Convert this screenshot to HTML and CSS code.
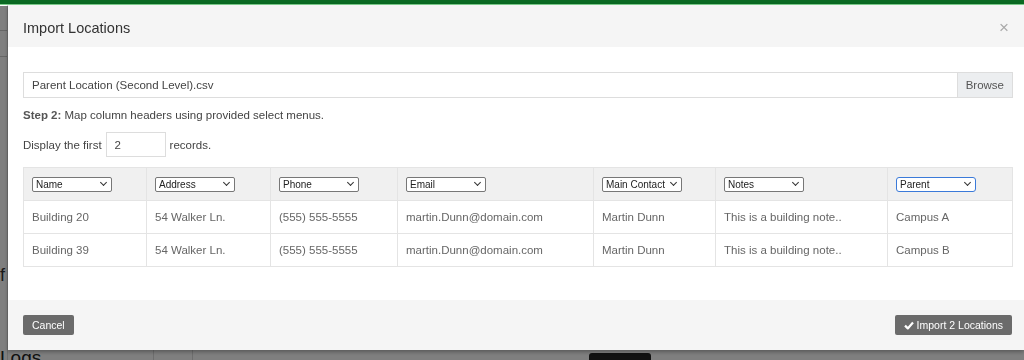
FILE: index.html
```html
<!DOCTYPE html>
<html lang="en">
<head>
    <meta charset="UTF-8">
    <title>Import Locations</title>
    <link rel="stylesheet" href="styles.css">
</head>
<body>
    <div class="topbar"></div>
    <div class="page">
        <div class="side">
            <div class="side-row"></div>
            <div class="side-row"></div>
            <div class="side-letter">f</div>
        </div>
        <div class="page-bottom">
            <span class="logs">Logs</span>
            <span class="col-line"></span>
            <span class="page-head">IMPORT LOGS</span>
            <span class="dark-btn"></span>
            <span class="page-head second">IMPORT LOCATIONS</span>
        </div>
    </div>
    <div class="backdrop"></div>

    <div class="modal">
        <div class="modal-header">
            <h4>Import Locations</h4>
            <span class="close">&times;</span>
        </div>
        <div class="modal-body">
            <div class="file-input">
                <span class="file-name">Parent Location (Second Level).csv</span>
                <span class="browse">Browse</span>
            </div>
            <p class="step"><b>Step 2:</b> Map column headers using provided select menus.</p>
            <div class="display-row">
                Display the first <input type="text" class="count" value="2"> records.
            </div>
            <table class="map-table">
                <thead>
                    <tr>
                        <th class="c1"><span class="sel">Name</span></th>
                        <th class="c2"><span class="sel">Address</span></th>
                        <th class="c3"><span class="sel">Phone</span></th>
                        <th class="c4"><span class="sel">Email</span></th>
                        <th class="c5"><span class="sel">Main Contact</span></th>
                        <th class="c6"><span class="sel">Notes</span></th>
                        <th class="c7"><span class="sel focus">Parent</span></th>
                    </tr>
                </thead>
                <tbody>
                    <tr>
                        <td>Building 20</td>
                        <td>54 Walker Ln.</td>
                        <td>(555) 555-5555</td>
                        <td>martin.Dunn@domain.com</td>
                        <td>Martin Dunn</td>
                        <td>This is a building note..</td>
                        <td>Campus A</td>
                    </tr>
                    <tr>
                        <td>Building 39</td>
                        <td>54 Walker Ln.</td>
                        <td>(555) 555-5555</td>
                        <td>martin.Dunn@domain.com</td>
                        <td>Martin Dunn</td>
                        <td>This is a building note..</td>
                        <td>Campus B</td>
                    </tr>
                </tbody>
            </table>
        </div>
        <div class="modal-footer">
            <button class="btn">Cancel</button>
            <button class="btn">
                <svg width="10" height="9" viewBox="0 0 10 9"><path d="M1 4.6 L3.8 7.4 L9 1.6" fill="none" stroke="#fff" stroke-width="2.2" stroke-linejoin="round"/></svg>
                Import 2 Locations
            </button>
        </div>
    </div>
</body>
</html>
```

FILE: styles.css
```css
* {
    margin: 0;
    padding: 0;
    box-sizing: border-box;
}
body {
    width: 1024px;
    height: 360px;
    overflow: hidden;
    background: #fff;
    font-family: "Liberation Sans", Arial, sans-serif;
    color: #212529;
}
.topbar {
    height: 5px;
    background: #0b6a23;
    border-bottom: 1px solid #7fd08e;
}
.page {
    position: relative;
    height: 355px;
}
.side {
    width: 8px;
    height: 100%;
    border-right: 1px solid #ddd;
}
.side-row {
    height: 26px;
    border-bottom: 1px solid #ccc;
}
.side-letter {
    margin-top: 208px;
    font-size: 18px;
    color: #333;
}
.page-bottom {
    position: absolute;
    left: 0;
    right: 0;
    top: 342px;
    height: 13px;
    overflow: hidden;
    display: flex;
    align-items: flex-start;
}
.page-bottom > span {
    flex: none;
}
.logs {
    font-size: 19px;
    line-height: 22px;
    color: #222;
    width: 153px;
}
.col-line {
    width: 40px;
    height: 20px;
    border-left: 1px solid #ddd;
    border-right: 1px solid #ddd;
}
.page-head {
    margin-left: 12px;
    margin-top: 10px;
    font-size: 13px;
    letter-spacing: 1px;
    color: #333;
    width: 384px;
}
.dark-btn {
    width: 62px;
    height: 20px;
    margin-top: 6px;
    background: #222;
    border-radius: 3px;
}
.page-head.second {
    margin-left: 59px;
}
.backdrop {
    position: fixed;
    left: 0;
    top: 6px;
    right: 0;
    bottom: 0;
    background: rgba(0, 0, 0, 0.5);
}
.modal {
    position: fixed;
    left: 8px;
    top: 5px;
    width: 1016px;
    height: 345px;
    background: #fff;
    display: flex;
    flex-direction: column;
    box-shadow: 0 2px 4px rgba(0, 0, 0, 0.3);
}
.modal-header {
    height: 42px;
    background: #f5f5f5;
    display: flex;
    align-items: center;
    justify-content: space-between;
    padding: 0 11px 0 15px;
}
.modal-header h4 {
    font-size: 14.5px;
    font-weight: normal;
    color: #333;
    margin-top: 4px;
}
.close {
    font-size: 17px;
    color: #aaa;
    margin-right: 4px;
    margin-top: 4px;
}
.modal-body {
    flex: 1;
    padding: 25px 11px 0 15px;
}
.file-input {
    width: 990px;
    height: 26px;
    border: 1px solid #ddd;
    display: flex;
    align-items: center;
    justify-content: space-between;
    font-size: 11.5px;
}
.file-name {
    padding-left: 8px;
    color: #444;
}
.browse {
    height: 24px;
    line-height: 24px;
    padding: 0 8px;
    background: #eceef0;
    border-left: 1px solid #ddd;
    color: #555;
}
.step {
    margin-top: 11px;
    font-size: 11.5px;
    color: #444;
}
.step b {
    color: #555;
}
.display-row {
    margin-top: 11px;
    display: flex;
    align-items: center;
    gap: 4px;
    font-size: 11.5px;
    color: #444;
}
.count {
    width: 60px;
    height: 25px;
    border: 1px solid #ddd;
    padding-left: 8px;
    font: 11.5px "Liberation Sans", Arial, sans-serif;
    color: #444;
}
.map-table {
    margin-top: 10px;
    width: 990px;
    border-collapse: collapse;
    font-size: 11.5px;
    color: #666;
}
.map-table th,
.map-table td {
    border: 1px solid #e4e4e4;
    text-align: left;
    padding: 0 8px;
    height: 33px;
    font-weight: normal;
}
.map-table thead tr {
    background: #f0f0f0;
}
.c1 { width: 123px; }
.c2 { width: 124px; }
.c3 { width: 127px; }
.c4 { width: 196px; }
.c5 { width: 122px; }
.c6 { width: 172px; }
.sel {
    display: inline-flex;
    align-items: center;
    justify-content: space-between;
    gap: 2px;
    width: 80px;
    height: 15px;
    padding: 0 5px 0 3px;
    border: 1px solid #777;
    border-radius: 2px;
    background: #fff;
    font-size: 10px;
    color: #222;
    white-space: nowrap;
}
.sel::after {
    content: "";
    flex: none;
    width: 4px;
    height: 4px;
    border-right: 1.5px solid #333;
    border-bottom: 1.5px solid #333;
    transform: translateY(-2px) rotate(45deg);
}
.sel.focus {
    border: 1.5px solid #3b7ad9;
    border-radius: 3px;
}
.modal-footer {
    height: 50px;
    background: #f5f5f5;
    display: flex;
    align-items: center;
    justify-content: space-between;
    padding: 0 12px 0 15px;
}
.btn {
    height: 20px;
    padding: 0 9px;
    border: none;
    border-radius: 2px;
    background: #6b6b6b;
    color: #fff;
    font: 10.5px "Liberation Sans", Arial, sans-serif;
    display: inline-flex;
    align-items: center;
    gap: 3px;
}
```
